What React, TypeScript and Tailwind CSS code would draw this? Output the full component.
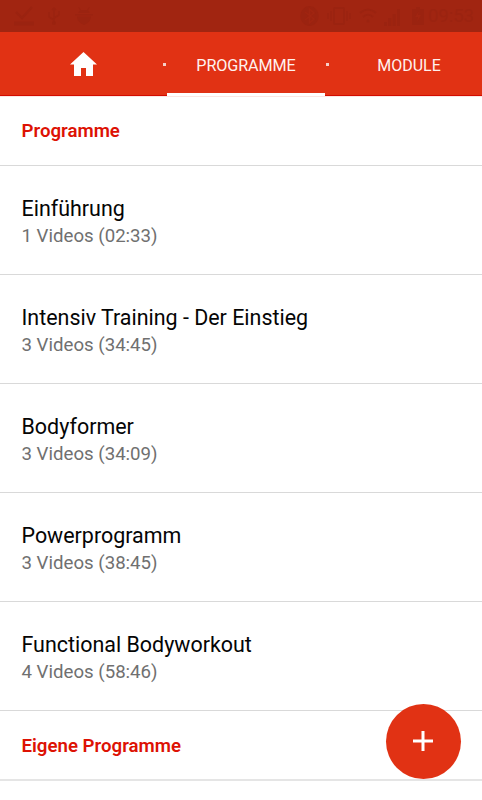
const programs = [
  { title: "Einführung", detail: "1 Videos (02:33)" },
  { title: "Intensiv Training - Der Einstieg", detail: "3 Videos (34:45)" },
  { title: "Bodyformer", detail: "3 Videos (34:09)" },
  { title: "Powerprogramm", detail: "3 Videos (38:45)" },
  { title: "Functional Bodyworkout", detail: "4 Videos (58:46)" },
];

function StatusBar() {
  return (
    <div className="flex h-8 items-center justify-between bg-[#a12511] pl-[14px] pr-[8px] text-[#9b2310]">
      <div className="flex items-center gap-[14px]">
        <svg width="20" height="20" viewBox="0 0 20 20" fill="none" stroke="currentColor">
          <path d="M2 6l6 6L18 1" strokeWidth="2.4" />
          <path d="M0 17.5h20" strokeWidth="4" />
        </svg>
        <svg width="12" height="18" viewBox="0 0 12 18" fill="none" stroke="currentColor" strokeWidth="1.5">
          <path d="M6 2v14M1 5v5l5 3M11 4v4l-5 3M4 3l2-2 2 2" />
          <circle cx="6" cy="16" r="1.2" fill="currentColor" />
        </svg>
        <svg width="18" height="18" viewBox="0 0 18 18" fill="currentColor" className="ml-[1px]">
          <path d="M4 0l2 3h6l2-3 .7.5L13 3.500c1.200.8 1.500 1.500 1.500 2.500h-11C3.500 5 4 4.300 5 3.500L3.300.5zM0 7h18v1.500H0zM2 9.500h14c0 4-3 6.500-7 8.500-4-2-7-4.500-7-8.500z" />
        </svg>
      </div>
      <div className="flex items-center">
        <svg width="19" height="20" viewBox="0 0 19 20" fill="none" stroke="#a12511" strokeWidth="1.5">
          <ellipse cx="9.500" cy="10" rx="9.200" ry="10" fill="#9b2310" stroke="none" />
          <path d="M5 6l9 7-4.500 4V3L14 7l-9 7" />
        </svg>
        <svg width="24" height="18" viewBox="0 0 24 18" fill="none" stroke="currentColor" strokeWidth="2" className="ml-[8px]">
          <rect x="7" y="1" width="10" height="16" rx="1" />
          <path d="M4 4v10M20 4v10M1 6v6M23 6v6" strokeWidth="1.500" />
        </svg>
        <svg width="18" height="16" viewBox="0 0 18 16" fill="none" stroke="currentColor" strokeWidth="2" className="ml-[8px]">
          <path d="M1 5c5-4.500 11-4.500 16 0M4 9c3-3 7-3 10 0" />
          <circle cx="9" cy="13" r="1.500" fill="currentColor" stroke="none" />
        </svg>
        <svg width="16" height="17" viewBox="0 0 16 17" fill="currentColor" className="ml-[7px] mt-[2px]">
          <path d="M0 13h3v4H0zM4.300 9h3v8h-3zM8.600 5h3v12h-3zM13 0h3v17h-3z" />
        </svg>
        <svg width="12" height="18" viewBox="0 0 12 18" className="ml-[12px]">
          <path d="M4 0h4v2h4v16H0V2h4z" fill="currentColor" />
          <path d="M7 4L3 10h3l-1 5 4-7H6z" fill="#a12511" />
        </svg>
        <span className="ml-[4px] text-[18.500px] leading-none">09:53</span>
      </div>
    </div>
  );
}

function Separator() {
  return <i className="size-[3px] bg-[#f5cfc8]" aria-hidden="true" />;
}

function TabBar() {
  return (
    <nav className="flex h-[64px] bg-[#e13214] text-[16px] text-[#fff1ee] shadow-[0_1px_0_#fbe6e3]">
      <a className="flex w-[167px] items-center justify-center border-b border-[#d30c00] pt-px" aria-label="Home">
        <svg width="27" height="24" viewBox="0 0 27 24" fill="white">
          <path d="M13.500 0L27 12.500h-4V24h-7v-8h-5v8H4V12.500H0z" />
        </svg>
      </a>
      <a className="relative flex w-[158px] items-center justify-center border-b-[3px] border-white pt-[7px]">
        <span className="absolute left-[-4px] top-[31px] flex"><Separator /></span>
        <span className="text-[16.200px] tracking-[-0.1px]">PROGRAMME</span>
        <span className="absolute right-[-4px] top-[31px] flex"><Separator /></span>
      </a>
      <a className="flex flex-1 items-center justify-center border-b border-[#d30c00] pl-[11px] pt-[4px]">MODULE</a>
    </nav>
  );
}

function SectionHeader({ children }: { children: string }) {
  return (
    <h2 className="pl-[21.500px] pt-[21px] text-[18.650px] leading-[28px] font-semibold text-[#dd1204]">
      {children}
    </h2>
  );
}

export default function App() {
  return (
    <div className="relative h-[800px] w-[482px] overflow-hidden bg-white font-[Roboto,sans-serif]">
      <StatusBar />
      <TabBar />
      <main>
        <div className="h-[69px]">
          <SectionHeader>Programme</SectionHeader>
        </div>
        <ul>
          {programs.map((program) => (
            <li key={program.title} className="h-[109px] border-t border-[#d9d9d9] pl-[21.500px] pt-[29px]">
              <h3 className="text-[21.450px] leading-[28px] text-[#050505]">{program.title}</h3>
              <p className="text-[18.650px] leading-[26px] text-[#707070]">{program.detail}</p>
            </li>
          ))}
        </ul>
        <div className="h-[71px] border-b-2 border-t border-b-[#e5e5e5] border-t-[#d9d9d9]">
          <SectionHeader>Eigene Programme</SectionHeader>
        </div>
      </main>
      <button className="absolute left-[385.500px] top-[703.500px] flex size-[75px] items-center justify-center rounded-full bg-[#e13214]" aria-label="Programm hinzufügen">
        <svg width="20" height="20" viewBox="0 0 20 20" fill="white">
          <path d="M8.500 0h3v8.500H20v3h-8.500V20h-3v-8.500H0v-3h8.500z" />
        </svg>
      </button>
    </div>
  );
}
